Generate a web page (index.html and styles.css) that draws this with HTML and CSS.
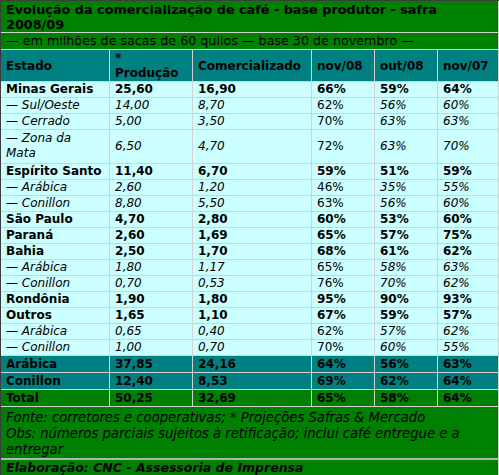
FILE: index.html
```html
<!DOCTYPE html>
<html lang="pt-BR">
<head>
    <meta charset="UTF-8">
    <title>Comercialização de café - safra 2008/09</title>
    <link rel="stylesheet" href="styles.css">
</head>
<body>
    <table class="safra">
        <colgroup>
            <col class="c-estado">
            <col class="c-prod">
            <col class="c-com">
            <col class="c-pct">
            <col class="c-pct">
            <col class="c-last">
        </colgroup>
        <tr class="title">
            <td colspan="6">Evolução da comercialização de café - base produtor - safra<br>2008/09</td>
        </tr>
        <tr class="sub">
            <td colspan="6">— em milhões de sacas de 60 quilos — base 30 de novembro —</td>
        </tr>
        <tr class="head">
            <td>Estado</td>
            <td>*<br>Produção</td>
            <td>Comercializado</td>
            <td>nov/08</td>
            <td>out/08</td>
            <td>nov/07</td>
        </tr>
        <tr class="state">
            <td>Minas Gerais</td><td>25,60</td><td>16,90</td><td>66%</td><td>59%</td><td>64%</td>
        </tr>
        <tr class="region">
            <td>— Sul/Oeste</td><td>14,00</td><td>8,70</td><td>62%</td><td>56%</td><td>60%</td>
        </tr>
        <tr class="region">
            <td>— Cerrado</td><td>5,00</td><td>3,50</td><td>70%</td><td>63%</td><td>63%</td>
        </tr>
        <tr class="region tall">
            <td>— Zona da<br>Mata</td><td>6,50</td><td>4,70</td><td>72%</td><td>63%</td><td>70%</td>
        </tr>
        <tr class="state">
            <td>Espírito Santo</td><td>11,40</td><td>6,70</td><td>59%</td><td>51%</td><td>59%</td>
        </tr>
        <tr class="region">
            <td>— Arábica</td><td>2,60</td><td>1,20</td><td>46%</td><td>35%</td><td>55%</td>
        </tr>
        <tr class="region">
            <td>— Conillon</td><td>8,80</td><td>5,50</td><td>63%</td><td>56%</td><td>60%</td>
        </tr>
        <tr class="state">
            <td>São Paulo</td><td>4,70</td><td>2,80</td><td>60%</td><td>53%</td><td>60%</td>
        </tr>
        <tr class="state">
            <td>Paraná</td><td>2,60</td><td>1,69</td><td>65%</td><td>57%</td><td>75%</td>
        </tr>
        <tr class="state">
            <td>Bahia</td><td>2,50</td><td>1,70</td><td>68%</td><td>61%</td><td>62%</td>
        </tr>
        <tr class="region">
            <td>— Arábica</td><td>1,80</td><td>1,17</td><td>65%</td><td>58%</td><td>63%</td>
        </tr>
        <tr class="region">
            <td>— Conillon</td><td>0,70</td><td>0,53</td><td>76%</td><td>70%</td><td>62%</td>
        </tr>
        <tr class="state">
            <td>Rondônia</td><td>1,90</td><td>1,80</td><td>95%</td><td>90%</td><td>93%</td>
        </tr>
        <tr class="state">
            <td>Outros</td><td>1,65</td><td>1,10</td><td>67%</td><td>59%</td><td>57%</td>
        </tr>
        <tr class="region">
            <td>— Arábica</td><td>0,65</td><td>0,40</td><td>62%</td><td>57%</td><td>62%</td>
        </tr>
        <tr class="region">
            <td>— Conillon</td><td>1,00</td><td>0,70</td><td>70%</td><td>60%</td><td>55%</td>
        </tr>
        <tr class="kind">
            <td>Arábica</td><td>37,85</td><td>24,16</td><td>64%</td><td>56%</td><td>63%</td>
        </tr>
        <tr class="kind">
            <td>Conillon</td><td>12,40</td><td>8,53</td><td>69%</td><td>62%</td><td>64%</td>
        </tr>
        <tr class="total">
            <td>Total</td><td>50,25</td><td>32,69</td><td>65%</td><td>58%</td><td>64%</td>
        </tr>
        <tr class="notes">
            <td colspan="6">Fonte: corretores e cooperativas; * Projeções Safras &amp; Mercado<br>Obs: números parciais sujeitos à retificação; inclui café entregue e a entregar</td>
        </tr>
        <tr class="credit">
            <td colspan="6">Elaboração: CNC - Assessoria de Imprensa</td>
        </tr>
    </table>
</body>
</html>
```

FILE: styles.css
```css
body {
    margin: 0;
    background-color: #fff;
    font-family: "DejaVu Sans", Verdana, sans-serif;
    font-size: 12px;
    color: #000;
}

.safra {
    width: 499px;
    table-layout: fixed;
    border-collapse: separate;
    border-spacing: 0;
    border: 1px solid #3c3c3c;
}

.c-estado { width: 109px; }
.c-prod   { width: 83px; }
.c-com    { width: 119px; }
.c-pct    { width: 63px; }
.c-last   { width: 61px; }

.safra td {
    padding: 0 4px 0 5px;
    line-height: 15px;
    border-right: 1px solid #d2d2d2;
    border-bottom: 1px solid #d2d2d2;
    background-color: #ccffff;
    vertical-align: middle;
}

/* top bars */
.title td {
    background-color: #008000;
    font-size: 12.8px;
    font-weight: bold;
    padding-top: 1px;
}

.sub td {
    background-color: #008000;
    font-size: 12.7px;
    line-height: 16px;
}

.head td {
    background-color: #008080;
    font-weight: bold;
    padding-top: 1px;
}

/* body rows */
.state td {
    font-weight: bold;
}

.region td {
    font-style: italic;
}

.region td:nth-child(4) {
    font-style: normal;
}

.tall td {
    padding-top: 1px;
    padding-bottom: 2px;
}

.kind td {
    background-color: #008080;
    font-weight: bold;
    line-height: 16px;
}

.total td {
    background-color: #008000;
    font-weight: bold;
    line-height: 16px;
}

/* footer */
.notes td {
    background-color: #008000;
    font-size: 13.2px;
    font-style: italic;
    line-height: 16px;
    padding-top: 3px;
    padding-bottom: 0;
    border-bottom: 2px solid #b4b4b4;
}

.credit td {
    background-color: #008000;
    font-size: 12.5px;
    font-style: italic;
    font-weight: bold;
    line-height: 16px;
    padding-top: 0;
}
```
